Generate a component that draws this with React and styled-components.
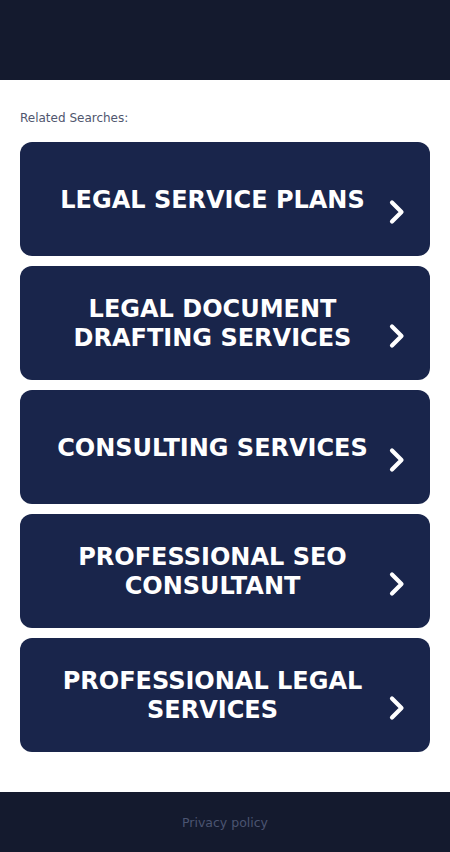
import React from "react";
import styled, { createGlobalStyle } from "styled-components";

const GlobalStyle = createGlobalStyle`
  html, body {
    margin: 0;
    padding: 0;
    background: #ffffff;
  }
  * { box-sizing: border-box; }
`;

const searches = [
  ["LEGAL SERVICE PLANS"],
  ["LEGAL DOCUMENT", "DRAFTING SERVICES"],
  ["CONSULTING SERVICES"],
  ["PROFESSIONAL SEO", "CONSULTANT"],
  ["PROFESSIONAL LEGAL", "SERVICES"],
];

function Chevron() {
  return (
    <svg width="18" height="26" viewBox="0 0 18 26" fill="none">
      <path d="M4 3.5 L13.5 13 L4 22.5" stroke="#ffffff" strokeWidth="4.2" strokeLinecap="round" strokeLinejoin="round" />
    </svg>
  );
}

export default function App() {
  return (
    <Page>
      <GlobalStyle />
      <Header />
      <Main>
        <Label>Related Searches:</Label>
        <List>
          {searches.map((lines, i) => (
            <Card key={i} href="#">
              <CardText>
                {lines.map((l, j) => (
                  <span key={j}>{l}</span>
                ))}
              </CardText>
              <Arrow>
                <Chevron />
              </Arrow>
            </Card>
          ))}
        </List>
      </Main>
      <Footer>
        <a href="#">Privacy policy</a>
      </Footer>
    </Page>
  );
}

const Page = styled.div`
  display: flex;
  flex-direction: column;
  min-height: 852px;
  font-family: "DejaVu Sans", sans-serif;
`;

const Header = styled.header`
  height: 80px;
  background: #141a2e;
`;

const Main = styled.main`
  padding: 30px 20px 40px;
`;

const Label = styled.div`
  font-family: "DejaVu Sans", sans-serif;
  font-size: 12px;
  color: #50566e;
  line-height: 16px;
  margin-bottom: 16px;
`;

const List = styled.div`
  display: flex;
  flex-direction: column;
  gap: 10px;
`;

const Card = styled.a`
  position: relative;
  display: flex;
  align-items: center;
  justify-content: center;
  height: 114px;
  padding: 2px 35px 0 10px;
  background: #19254b;
  border-radius: 12px;
  text-decoration: none;
`;

const CardText = styled.div`
  display: flex;
  flex-direction: column;
  align-items: center;
  text-align: center;
  color: #ffffff;
  font-family: "DejaVu Sans", sans-serif;
  font-weight: 700;
  font-size: 24px;
  line-height: 29px;
`;

const Arrow = styled.span`
  position: absolute;
  right: 24px;
  top: 57px;
  display: flex;
`;

const Footer = styled.footer`
  margin-top: auto;
  height: 60px;
  background: #141a2e;
  display: flex;
  align-items: center;
  justify-content: center;

  a {
    color: #4b5471;
    font-family: "DejaVu Sans", sans-serif;
    font-size: 12.5px;
    text-decoration: none;
  }
`;
